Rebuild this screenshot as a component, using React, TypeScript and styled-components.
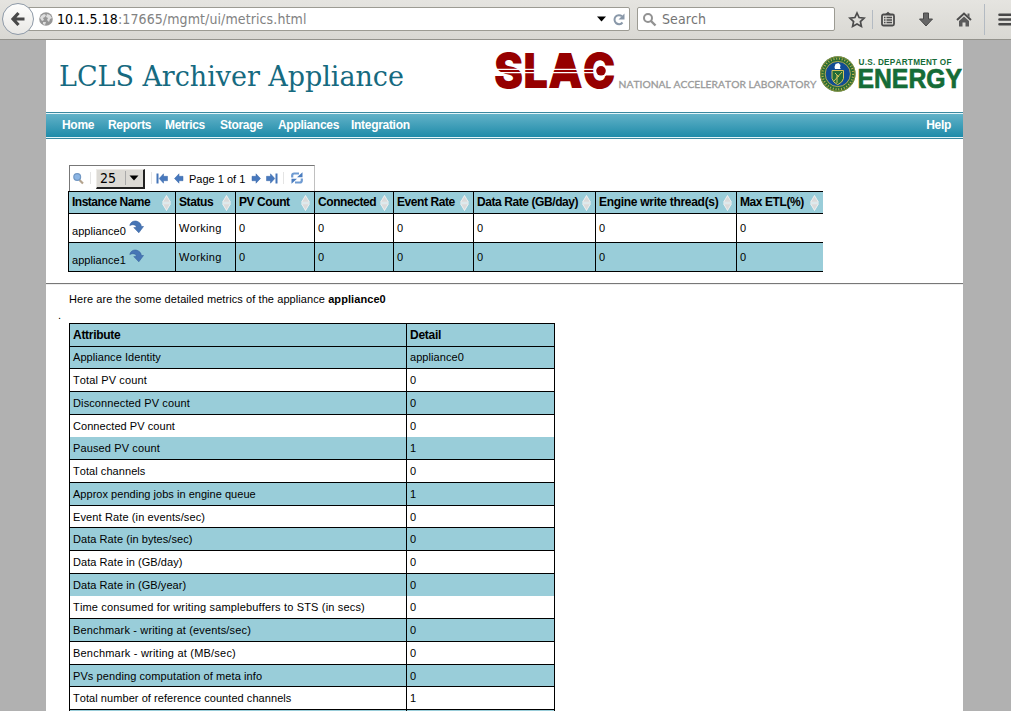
import React from 'react';
import styled, { createGlobalStyle } from 'styled-components';

const Global = createGlobalStyle`
  html, body { margin: 0; padding: 0; }
  body { background: #b1b1b1; overflow: hidden; height: 711px; }
  * { box-sizing: border-box; }
  svg { display: block; flex: none; }
`;

const Screen = styled.div`
  width: 1011px; height: 711px; overflow: hidden;
  display: flex; flex-direction: column;
  font-family: "Liberation Sans", Arial, sans-serif; font-size: 11px; color: #000;
  font-kerning: none;
`;

/* Browser toolbar */
const BrowserBar = styled.div`
  height: 40px; flex: none; display: flex; align-items: flex-start;
  background: linear-gradient(#e5e4e0, #d9d8d3);
  border-bottom: 1px solid #93928c;
  font-family: "DejaVu Sans Condensed", "DejaVu Sans", sans-serif; font-stretch: condensed; font-size: 14px;
  letter-spacing: .1px;
`;
const BackButton = styled.div`
  width: 32px; height: 32px; margin: 3px 0 0 2px; flex: none; border-radius: 50%;
  border: 1px solid #8e9aa8; background: linear-gradient(#fdfdfc, #e9e8e5);
  display: flex; align-items: center; justify-content: center; z-index: 1;
`;
const UrlField = styled.div`
  width: 604px; height: 24px; margin: 7px 0 0 -8px; flex: none; padding: 0 4px 0 12px;
  border: 1px solid #9c9b93; border-radius: 2px; background: #fff;
  display: flex; align-items: center;
`;
const UrlText = styled.div`
  flex: 1; margin-left: 4px; color: #828282; white-space: nowrap; line-height: 22px;
  b { font-weight: 400; color: #000; }
`;
const SearchField = styled.div`
  width: 198px; height: 24px; margin: 7px 0 0 7px; flex: none; padding-left: 4px;
  border: 1px solid #9c9b93; border-radius: 2px; background: #fff; color: #747474;
  display: flex; align-items: center; gap: 5px; line-height: 22px;
`;
const BarIcons = styled.div`
  display: flex; align-items: center; height: 38px; margin-left: 13px;
`;
const Divider = styled.i<{ $h: number; $l: number; $r: number }>`
  width: 1px; flex: none; height: ${p => p.$h}px; margin: 0 ${p => p.$r}px 0 ${p => p.$l}px; background: #b3bac2;
`;
const Gap = styled.i<{ $w: number }>`width: ${p => p.$w}px; flex: none;`;

/* Page */
const Page = styled.main`
  width: 917px; margin-left: 46px; flex: 1; min-height: 0; background: #fff; overflow: hidden;
`;
const Header = styled.header`
  height: 72px; display: flex; justify-content: space-between; padding-left: 13px;
`;
const Title = styled.h1`
  margin: 21px 0 0; font: 400 27px/32px "DejaVu Serif", serif; color: #166a80; white-space: nowrap;
  letter-spacing: -.04px;
`;
const Nav = styled.nav`
  height: 27px; border: solid #3b89a0; border-width: 1px 0; padding: 1px 0; background: #e4f5f9;
`;
const NavInner = styled.div`
  height: 23px; background: linear-gradient(#62b2c8, #1f8ba9);
  display: flex; padding: 0 12px 0 16px; color: #fff; font-weight: 700; font-size: 12px; line-height: 22px;
  letter-spacing: -.3px;
`;
const NavItem = styled.span<{ $w: number }>`
  width: ${p => p.$w}px; white-space: nowrap;
  &:last-child { margin-left: auto; width: auto; }
`;
const Pager = styled.div`
  width: 246px; height: 26px; margin: 26px 0 0 23px; padding: 0 0 1px 3px;
  border: 1px solid #777; border-right-color: #c0c0c0; border-bottom: 0;
  display: flex; align-items: center;
`;
const Sep = styled.i`width: 1px; height: 12px; flex: none; background: #e4e4e4;`;
const PageSize = styled.div`
  width: 49px; height: 20px; margin: 1px 6px 0 5px; flex: none; display: flex; align-items: center;
  background: #dcdad5; border: solid; border-width: 1px 2px 2px 1px; border-color: #edebe7 #222 #222 #edebe7;
  font: 14px/17px "DejaVu Sans Condensed", "DejaVu Sans", sans-serif; font-stretch: condensed; padding-left: 3px;
  span { width: 26px; border-right: 1px solid #aaa; height: 14px; line-height: 15px; }
  svg { margin-left: 3px; }
`;
const PageLabel = styled.span`width: 61px; flex: none; white-space: nowrap; padding-top: 2px;`;

const Grid = styled.div`width: 755px; margin-left: 22px; border-left: 1px solid #000;`;
const GridRow = styled.div<{ $kind: 'head' | 'odd' | 'even' }>`
  display: grid; grid-template-columns: 107px 60px 79px 79px 80px 122px 141px 86px;
  height: ${p => (p.$kind === 'head' ? 23 : 29)}px;
  background: ${p => (p.$kind === 'odd' ? '#fff' : '#99cdd9')};
  border-bottom: 1px solid #000;
  letter-spacing: .06px;
  ${p => p.$kind === 'head' && 'border-top: 1px solid #000; font-weight: 700; font-size: 12px; letter-spacing: -.42px;'}
`;
const Cell = styled.div<{ $spacing?: number }>`
  padding: 0 3px; border-right: 1px solid #000; display: flex; align-items: center;
  justify-content: space-between; white-space: nowrap;
  ${p => p.$spacing !== undefined && `letter-spacing: ${p.$spacing}px;`}
  &:last-child { border-right: 0; }
`;
const HeadCell = styled(Cell)`
  padding-bottom: 1px;
  svg { margin: 1px 1px 0 0; }
`;
const NameCell = styled(Cell)`
  justify-content: flex-start; gap: 3px;
  span { padding-top: 5px; }
  svg { margin-top: -3px; }
`;
const Rule = styled.hr`
  margin: 11px 0 0; border: 0; height: 2px; background: linear-gradient(#777 50%, #eee 50%);
`;
const Intro = styled.p`
  margin: 8px 0 0 23px; line-height: 13px; height: 13px; white-space: nowrap; letter-spacing: .08px;
`;
const Dot = styled.p`margin: 3px 0 0 12px; height: 14px; line-height: 13px;`;
const Details = styled.div`
  width: 486px; margin-left: 23px; border: solid #000; border-width: 0 1px;
`;
const DetailRow = styled.div<{ $h: number; $fill: boolean; $line: boolean; $spacing: number }>`
  display: grid; grid-template-columns: 337px 147px; height: ${p => p.$h}px;
  background: ${p => (p.$fill ? '#99cdd9' : '#fff')};
  border-top: ${p => (p.$line ? 1 : 0)}px solid #000;
  letter-spacing: ${p => p.$spacing}px;
  &:first-child { font-weight: 700; font-size: 12px; letter-spacing: -.28px; }
`;
const DetailCell = styled.div`
  padding: 0 3px; white-space: nowrap; line-height: 22px;
  ${DetailRow}:nth-child(2) & { line-height: 21px; }
  &:first-child { border-right: 1px solid #000; }
`;

const LogoSlot = styled.div`
  padding-top: 10px;
  svg { overflow: visible; }
`;

const Logos = () => (
  <svg width="468" height="44" viewBox="495 50 468 44">
    <text x="494" y="88.300" fill="#960000" fontFamily="Inter" fontWeight="900" fontSize="48.5" textLength="121.500" lengthAdjust="spacingAndGlyphs">SLAC</text>
    <path d="M560.500 53h10l6.500 22h-22z" fill="#960000" />
    <path d="M495 69.300h99M495 72.700h99" stroke="#fff" strokeWidth="1.200" />
    <circle cx="601" cy="70.800" r="6.700" fill="#fff" />
    <circle cx="601" cy="70.800" r="4.800" fill="#960000" />
    <text x="618.5" y="87.500" fill="#999" stroke="#999" strokeWidth=".3" fontFamily="Lato" fontSize="10.300" textLength="198">NATIONAL ACCELERATOR LABORATORY</text>
    <circle cx="837.8" cy="74" r="17.800" fill="#286b35" />
    <circle cx="837.8" cy="74" r="15.300" fill="none" stroke="#c4b650" strokeWidth="2" strokeDasharray="1 1.800" />
    <circle cx="837.8" cy="74" r="17.200" fill="none" stroke="#a99c3c" strokeWidth=".8" />
    <circle cx="837.8" cy="74" r="12.600" fill="#114c94" stroke="#d3bd4c" strokeWidth=".8" />
    <path d="M834.500 67l1-3 3-1 2 2-.5 3 1 1h-6z" fill="#fff" />
    <path d="M832 70.500h11.500v8q-1 4-5.800 6.200Q833 82.500 832 78.500z" fill="#226c37" stroke="#d5c45c" strokeWidth="1" />
    <path d="M834 81l8-9M835 73l4 4M837 75v8" stroke="#d5c45c" strokeWidth="1" />
    <g fill="#156c37" fontFamily="Liberation Sans" fontWeight="700">
      <text x="858.5" y="65" fontSize="8.200" textLength="93" lengthAdjust="spacing">U.S. DEPARTMENT OF</text>
      <text x="857.5" y="88.300" fontSize="28" stroke="#156c37" strokeWidth=".7" textLength="104.500" lengthAdjust="spacingAndGlyphs">ENERGY</text>
    </g>
  </svg>
);

const Globe = () => (
  <svg width="14" height="14" viewBox="0 0 14 14">
    <circle cx="7" cy="7" r="6.800" fill="#969696" />
    <path d="M2 4l3-2 2 1-1 2-2 1 1 2-2 1-2-3zM8 2l3 1 2 3-2 1-1 3-2-2 1-2-2-1zM4 10l3 0-1 3-2-1z" fill="#dedede" />
  </svg>
);
const SortArrows = () => (
  <svg width="9" height="16" viewBox="0 0 9 16">
    <path d="M4.500.5L8.500 7.300h-8zM4.500 15.500L8.500 8.700h-8z" fill="#dadada" stroke="#f3f3f3" strokeWidth=".9" />
  </svg>
);
const Jump = () => (
  <svg width="15" height="14" viewBox="0 0 15 14">
    <path d="M.8 5.500C1.500 1.800 5 .4 8 1.300c2.700.9 4.300 3 4.300 5.200h2.200L9.800 12.800 4.800 7.600h2.600C7.400 5 4 3.800.8 5.500z" fill="#4775b5" stroke="#36629f" strokeWidth=".6" />
  </svg>
);
const Arrow = ({ flip, bar }: { flip?: boolean; bar?: boolean }) => (
  <svg width="12" height="11" viewBox="0 0 12 11">
    <g transform={flip ? 'matrix(-1 0 0 1 12 0)' : undefined}>
      <path d={bar ? 'M3.200 5.500L7.500.8v2.500h4v4.400h-4v2.500z' : 'M1.500 5.500L6 .8v2.500h4v4.400H6v2.500z'} fill="#4778bd" stroke="#3a68a8" strokeWidth=".5" />
      {bar && <path d="M1.500.5v10" stroke="#4475b8" strokeWidth="2" />}
    </g>
  </svg>
);

const columns = ['Instance Name', 'Status', 'PV Count', 'Connected', 'Event Rate', 'Data Rate (GB/day)', 'Engine write thread(s)', 'Max ETL(%)'];

type Detail = { name: string; value: string; h: number; open?: boolean; spacing?: number };
const details: Detail[] = [
  { name: 'Attribute', value: 'Detail', h: 23 },
  { name: 'Appliance Identity', value: 'appliance0', h: 22 },
  { name: 'Total PV count', value: '0', h: 23, spacing: 0.12 },
  { name: 'Disconnected PV count', value: '0', h: 23, spacing: 0.12 },
  { name: 'Connected PV count', value: '0', h: 23 },
  { name: 'Paused PV count', value: '1', h: 22, open: true, spacing: 0.12 },
  { name: 'Total channels', value: '0', h: 23 },
  { name: 'Approx pending jobs in engine queue', value: '1', h: 23, spacing: 0.03 },
  { name: 'Event Rate (in events/sec)', value: '0', h: 22, spacing: 0.12 },
  { name: 'Data Rate (in bytes/sec)', value: '0', h: 23 },
  { name: 'Data Rate in (GB/day)', value: '0', h: 23 },
  { name: 'Data Rate in (GB/year)', value: '0', h: 23 },
  { name: 'Time consumed for writing samplebuffers to STS (in secs)', value: '0', h: 22, open: true, spacing: 0.17 },
  { name: 'Benchmark - writing at (events/sec)', value: '0', h: 23, spacing: 0.16 },
  { name: 'Benchmark - writing at (MB/sec)', value: '0', h: 23, spacing: 0.21 },
  { name: 'PVs pending computation of meta info', value: '0', h: 22, spacing: 0.09 },
  { name: 'Total number of reference counted channels', value: '1', h: 23 },
  { name: '', value: '', h: 23 },
];

export default function App() {
  return (
    <Screen>
      <Global />
      <BrowserBar>
        <BackButton>
          <svg width="16" height="16" viewBox="0 0 16 16"><path d="M8.500 2L3 8l5.500 6M3.500 8H14.500" fill="none" stroke="#494949" strokeWidth="3.200" /></svg>
        </BackButton>
        <UrlField>
          <Globe />
          <UrlText><b>10.1.5.18</b>:17665/mgmt/ui/metrics.html</UrlText>
          <svg width="9" height="6" viewBox="0 0 9 6"><path d="M0 .5h9L4.500 5.500z" /></svg>
          <Gap $w={7} />
          <svg width="12" height="13" viewBox="0 0 12 13"><path d="M9.500 9.500A4.500 4.500 0 1 1 9 3.300" fill="none" stroke="#8998a9" strokeWidth="2" /><path d="M11.500.5v6h-6z" fill="#8998a9" /></svg>
        </UrlField>
        <SearchField>
          <svg width="15" height="15" viewBox="0 0 15 15"><circle cx="6" cy="6" r="4" fill="none" stroke="#929292" strokeWidth="2" /><path d="M9 9l4.500 4.500" stroke="#929292" strokeWidth="2.400" /></svg>
          Search
        </SearchField>
        <BarIcons>
          <svg width="18" height="17" viewBox="0 0 18 17"><path d="M9 2l2.100 4.500 5 .6-3.700 3.400 1 4.900L9 13l-4.400 2.400 1-4.900L1.900 7.100l5-.6z" fill="none" stroke="#4c4c4c" strokeWidth="1.700" /></svg>
          <Divider $h={19} $l={6} $r={8} />
          <svg width="14" height="16" viewBox="0 0 14 16"><rect x="1" y="3.500" width="12" height="11" rx="1.500" fill="none" stroke="#4c4c4c" strokeWidth="1.800" /><path d="M3.500 3.500L5 2.500 7 .8l2 1.700 1.500 1v1z" fill="#4c4c4c" /><path d="M3 6.500h1.500M5.500 6.500H11M3 9h1.500M5.500 9H11M3 11.500h1.500M5.500 11.500H11" stroke="#4c4c4c" strokeWidth="1.300" /></svg>
          <Gap $w={24} />
          <svg width="14" height="15" viewBox="0 0 14 15"><path d="M4.500 1h5v6h4L7 14 .5 7h4z" fill="#666" stroke="#484848" /></svg>
          <Gap $w={23} />
          <svg width="16" height="15" viewBox="0 0 16 15"><path d="M1 8l7-6.500L15 8" fill="none" stroke="#4c4c4c" strokeWidth="2" /><path d="M11.500 1.500h2v4l-2-2zM3 9l5-4.500L13 9v5.500H9.500v-4h-3v4H3z" fill="#5c5c5c" /></svg>
          <Divider $h={31} $l={12} $r={13} />
          <svg width="16" height="13" viewBox="0 0 16 13"><path d="M1.500 1.700h14M1.500 6.500h14M1.500 11.300h14" stroke="#484848" strokeWidth="2.600" strokeLinecap="round" /></svg>
        </BarIcons>
      </BrowserBar>
      <Page>
        <Header>
          <Title>LCLS Archiver Appliance</Title>
          <LogoSlot><Logos /></LogoSlot>
        </Header>
        <Nav>
          <NavInner>
            <NavItem $w={46}>Home</NavItem>
            <NavItem $w={57}>Reports</NavItem>
            <NavItem $w={55}>Metrics</NavItem>
            <NavItem $w={58}>Storage</NavItem>
            <NavItem $w={73}>Appliances</NavItem>
            <NavItem $w={70}>Integration</NavItem>
            <NavItem $w={30}>Help</NavItem>
          </NavInner>
        </Nav>
        <Pager>
          <svg width="11" height="13" viewBox="0 0 11 13"><path d="M6.500 8l3.500 3.500" stroke="#b4a48e" strokeWidth="2.200" /><circle cx="4.200" cy="5" r="3.400" fill="#8bb5e4" stroke="#7298c4" strokeWidth="1.200" /></svg>
          <Gap $w={6} /><Sep />
          <PageSize><span>25</span><svg width="10" height="6" viewBox="0 0 10 6"><path d="M.5.500h9L5 5.500z" /></svg></PageSize>
          <Sep /><Gap $w={4} />
          <Arrow bar /><Gap $w={5} /><Arrow /><Gap $w={4} />
          <PageLabel>Page 1 of 1</PageLabel>
          <Arrow flip /><Gap $w={4} /><Arrow flip bar />
          <Gap $w={5} /><Sep /><Gap $w={7} />
          <svg width="12" height="12" viewBox="0 0 12 12"><path d="M1.200 5.500V3.500Q1.200 1.500 3.200 1.500H8M10.800 6.500v2q0 2-2 2H4" fill="none" stroke="#6f9bd2" strokeWidth="2.200" /><path d="M6 5.200h5.500v-5zM6 6.800H.500v5z" fill="#4b7dbf" /></svg>
        </Pager>
        <Grid>
          <GridRow $kind="head">
            {columns.map((c, i) => (
              <HeadCell key={c} $spacing={i === 0 ? -0.5 : i === 6 ? -0.3 : undefined}>{c}<SortArrows /></HeadCell>
            ))}
          </GridRow>
          {['appliance0', 'appliance1'].map((n, i) => (
            <GridRow key={n} $kind={i ? 'even' : 'odd'}>
              <NameCell><span>{n}</span><Jump /></NameCell>
              <Cell $spacing={0.35}>Working</Cell>
              {['0', '0', '0', '0', '0', '0'].map((v, j) => <Cell key={j}>{v}</Cell>)}
            </GridRow>
          ))}
        </Grid>
        <Rule />
        <Intro>Here are the some detailed metrics of the appliance <b>appliance0</b></Intro>
        <Dot>.</Dot>
        <Details>
          {details.map((d, i) => (
            <DetailRow key={i} $h={d.h} $fill={i === 0 || i % 2 === 1} $line={!d.open} $spacing={d.spacing ?? 0.06}>
              <DetailCell>{d.name}</DetailCell>
              <DetailCell>{d.value}</DetailCell>
            </DetailRow>
          ))}
        </Details>
      </Page>
    </Screen>
  );
}
